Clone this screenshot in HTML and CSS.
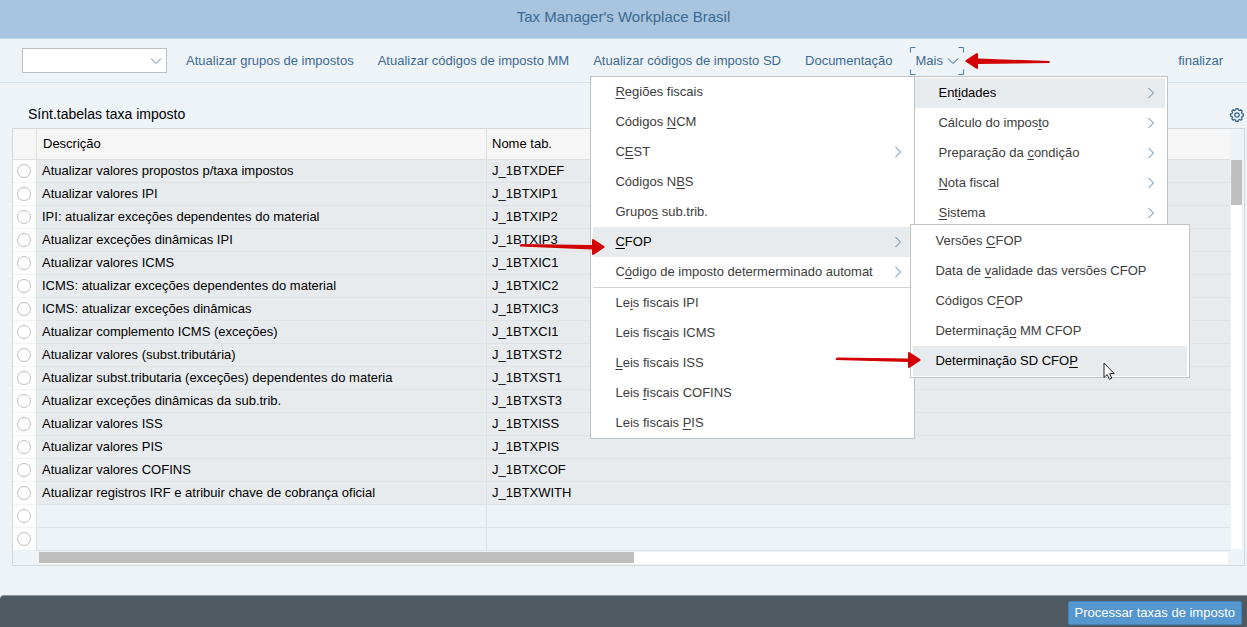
FILE: index.html
```html
<!DOCTYPE html>
<html lang="pt-BR">
<head>
<meta charset="utf-8">
<title>Tax Manager's Workplace Brasil</title>
<link rel="stylesheet" href="styles.css">
</head>
<body>
<header class="titlebar"><h1 class="titlebar-text">Tax Manager's Workplace Brasil</h1></header>

<nav class="toolbar">
  <div class="combo">
    <select class="combo-select" aria-label="Comando"><option></option></select>
    <svg class="combo-icon" width="12" height="8" viewBox="0 0 12 8"><path d="M1 1.5 6 6.500 11 1.500"/></svg>
  </div>
  <button class="tool">Atualizar grupos de impostos</button>
  <button class="tool">Atualizar códigos de imposto MM</button>
  <button class="tool">Atualizar códigos de imposto SD</button>
  <button class="tool">Documentação</button>
  <div class="more">
    <button class="tool more-button">Mais
      <svg width="12" height="8" viewBox="0 0 12 8"><path d="M1 1.500 6 6.500 11 1.500"/></svg>
    </button>
    <svg class="focus" viewBox="0 0 54 28"><path d="M.5 5.500V.5H5.500M48.500.5H53.500V5.500M53.500 22.500V27.500H48.500M5.500 27.500H.5V22.500"/></svg>

    <div class="menu menu-main">
      <button class="item active"><span>Ent<u>i</u>dades</span><svg class="chev" viewBox="0 0 8 12"><path d="M1.500 1 6.500 6 1.500 11"/></svg></button>
      <button class="item"><span>Cálculo do impos<u>t</u>o</span><svg class="chev" viewBox="0 0 8 12"><path d="M1.500 1 6.500 6 1.500 11"/></svg></button>
      <button class="item"><span>Preparação da <u>c</u>ondição</span><svg class="chev" viewBox="0 0 8 12"><path d="M1.500 1 6.500 6 1.500 11"/></svg></button>
      <button class="item"><span><u>N</u>ota fiscal</span><svg class="chev" viewBox="0 0 8 12"><path d="M1.500 1 6.500 6 1.500 11"/></svg></button>
      <button class="item"><span><u>S</u>istema</span><svg class="chev" viewBox="0 0 8 12"><path d="M1.500 1 6.500 6 1.500 11"/></svg></button>
    </div>

    <div class="menu menu-entities">
      <button class="item"><span><u>R</u>egiões fiscais</span></button>
      <button class="item"><span>Códigos <u>N</u>CM</span></button>
      <button class="item"><span>C<u>E</u>ST</span><svg class="chev" viewBox="0 0 8 12"><path d="M1.500 1 6.500 6 1.500 11"/></svg></button>
      <button class="item"><span>Códigos N<u>B</u>S</span></button>
      <button class="item"><span>Grupo<u>s</u> sub.trib.</span></button>
      <button class="item active"><span><u>C</u>FOP</span><svg class="chev" viewBox="0 0 8 12"><path d="M1.500 1 6.500 6 1.500 11"/></svg></button>
      <button class="item"><span>C<u>ó</u>digo de imposto determerminado automat</span><svg class="chev" viewBox="0 0 8 12"><path d="M1.500 1 6.500 6 1.500 11"/></svg></button>
      <hr class="divider">
      <button class="item"><span>Le<u>i</u>s fiscais IPI</span></button>
      <button class="item"><span>Leis fisc<u>a</u>is ICMS</span></button>
      <button class="item"><span><u>L</u>eis fiscais ISS</span></button>
      <button class="item"><span>Leis <u>f</u>iscais COFINS</span></button>
      <button class="item"><span>Leis fiscais <u>P</u>IS</span></button>
    </div>

    <div class="menu menu-cfop">
      <button class="item"><span>Versões <u>C</u>FOP</span></button>
      <button class="item"><span>Data de <u>v</u>alidade das versões CFOP</span></button>
      <button class="item"><span>Códigos C<u>F</u>OP</span></button>
      <button class="item"><span>Determinaçã<u>o</u> MM CFOP</span></button>
      <button class="item active"><span>Determinação SD CFO<u>P</u></span></button>
    </div>

    <svg class="arrow arrow-more" viewBox="0 0 86 18"><path d="M.5 9.500Q0 8.500 1 8L11 1.500Q13 .5 13 2V6.500L84 9Q86 10 84 11L13 12V16Q13 17.500 11 16.500Z"/></svg>
    <svg class="arrow arrow-entity" viewBox="0 0 86 18"><path d="M85.500 9.500Q86 8.500 85 8L75 1.500Q73 .5 73 2V7L2 6Q0 7 1 8.500L73 11.500V16Q73 17.500 75 16.500Z"/></svg>
    <svg class="arrow arrow-cfop" viewBox="0 0 86 18"><path d="M85.500 9.500Q86 8.500 85 8L75 1.500Q73 .5 73 2V7.500L2 6.500Q0 7.500 1 9L73 11V16Q73 17.500 75 16.500Z"/></svg>
    <svg class="pointer" viewBox="0 0 12 18"><path d="M1 1V15.500L4.200 12.500 6.400 17.200 8.800 16.200 6.700 11.600H11.200Z"/></svg>
  </div>
  <button class="tool tool-end">finalizar</button>
</nav>

<main class="content">
  <div class="panel-head">
    <h2 class="panel-title">Sínt.tabelas taxa imposto</h2>
    <button class="gear" aria-label="Configurações"><svg width="14" height="14" viewBox="0 0 14 14"><path d="M5.700 1.900 6 .600H8L8.300 1.900 9.700 2.500 10.800 1.800 12.200 3.200 11.500 4.300 12.100 5.700 13.400 6V8L12.100 8.300 11.500 9.700 12.200 10.800 10.800 12.200 9.700 11.500 8.300 12.100 8 13.400H6L5.700 12.100 4.300 11.500 3.200 12.200 1.800 10.800 2.500 9.700 1.900 8.300.600 8V6L1.900 5.700 2.500 4.300 1.800 3.200 3.200 1.800 4.300 2.500Z"/><circle cx="7" cy="7" r="2.200"/></svg></button>
  </div>
  <div class="grid">
    <table class="table">
      <colgroup><col class="col-pick"><col class="col-desc"><col></colgroup>
      <thead><tr><th></th><th>Descrição</th><th>Nome tab.</th></tr></thead>
      <tbody>
        <tr><td><input type="radio" name="row" aria-label="J_1BTXDEF"></td><td>Atualizar valores propostos p/taxa impostos</td><td>J_1BTXDEF</td></tr>
        <tr><td><input type="radio" name="row" aria-label="J_1BTXIP1"></td><td>Atualizar valores IPI</td><td>J_1BTXIP1</td></tr>
        <tr><td><input type="radio" name="row" aria-label="J_1BTXIP2"></td><td>IPI: atualizar exceções dependentes do material</td><td>J_1BTXIP2</td></tr>
        <tr><td><input type="radio" name="row" aria-label="J_1BTXIP3"></td><td>Atualizar exceções dinâmicas IPI</td><td>J_1BTXIP3</td></tr>
        <tr><td><input type="radio" name="row" aria-label="J_1BTXIC1"></td><td>Atualizar valores ICMS</td><td>J_1BTXIC1</td></tr>
        <tr><td><input type="radio" name="row" aria-label="J_1BTXIC2"></td><td>ICMS: atualizar exceções dependentes do material</td><td>J_1BTXIC2</td></tr>
        <tr><td><input type="radio" name="row" aria-label="J_1BTXIC3"></td><td>ICMS: atualizar exceções dinâmicas</td><td>J_1BTXIC3</td></tr>
        <tr><td><input type="radio" name="row" aria-label="J_1BTXCI1"></td><td>Atualizar complemento ICMS (exceções)</td><td>J_1BTXCI1</td></tr>
        <tr><td><input type="radio" name="row" aria-label="J_1BTXST2"></td><td>Atualizar valores (subst.tributária)</td><td>J_1BTXST2</td></tr>
        <tr><td><input type="radio" name="row" aria-label="J_1BTXST1"></td><td>Atualizar subst.tributaria (exceções) dependentes do materia</td><td>J_1BTXST1</td></tr>
        <tr><td><input type="radio" name="row" aria-label="J_1BTXST3"></td><td>Atualizar exceções dinâmicas da sub.trib.</td><td>J_1BTXST3</td></tr>
        <tr><td><input type="radio" name="row" aria-label="J_1BTXISS"></td><td>Atualizar valores ISS</td><td>J_1BTXISS</td></tr>
        <tr><td><input type="radio" name="row" aria-label="J_1BTXPIS"></td><td>Atualizar valores PIS</td><td>J_1BTXPIS</td></tr>
        <tr><td><input type="radio" name="row" aria-label="J_1BTXCOF"></td><td>Atualizar valores COFINS</td><td>J_1BTXCOF</td></tr>
        <tr><td><input type="radio" name="row" aria-label="J_1BTXWITH"></td><td>Atualizar registros IRF e atribuir chave de cobrança oficial</td><td>J_1BTXWITH</td></tr>
        <tr class="empty"><td><input type="radio" name="row" aria-label="Linha vazia 1"></td><td></td><td></td></tr>
        <tr class="empty"><td><input type="radio" name="row" aria-label="Linha vazia 2"></td><td></td><td></td></tr>
      </tbody>
    </table>
    <div class="vscroll"><div class="vthumb"></div></div>
    <div class="hscroll"><div class="hthumb"></div></div>
  </div>
</main>

<footer class="footer"><button class="primary">Processar taxas de imposto</button></footer>
</body>
</html>
```
FILE: styles.css
```css
* { box-sizing: border-box; }

body {
  margin: 0;
  min-height: 100vh;
  display: flex;
  flex-direction: column;
  background: #eef3f8;
  color: #000;
  font: 13px/16px "Liberation Sans", Arial, sans-serif;
}

button, select { font: inherit; color: inherit; }
button { border: 0; padding: 0; background: none; white-space: nowrap; }
svg { display: block; fill: none; stroke: #346187; }

.titlebar {
  height: 39px;
  padding-top: 8px;
  background: #a9c4de;
  border-bottom: 1px solid #bcd2e6;
  text-align: center;
}
.titlebar-text { margin: 0; color: #3c6a92; font-size: 15px; line-height: 18px; font-weight: normal; }

.toolbar {
  display: flex;
  align-items: center;
  height: 44px;
  padding: 0 24px 0 22px;
  gap: 24px;
  border-bottom: 1px solid #d2e1ee;
}
.tool { color: #3c6a92; }
.tool-end { margin-left: auto; }
.combo { position: relative; margin-right: -5px; }
.combo-select {
  display: block;
  width: 145px;
  height: 25px;
  appearance: none;
  background: #fff;
  border: 1px solid #bfbfbf;
  border-radius: 0;
}
.combo-icon { position: absolute; right: 5px; top: 9px; stroke: #5b86ab; pointer-events: none; }

.more { position: relative; margin-left: -6px; }
.more-button { display: flex; align-items: center; gap: 4px; height: 28px; padding: 0 5px; }
.focus { position: absolute; left: 0; top: 0; width: 54px; height: 28px; pointer-events: none; stroke: #4c80aa; }

/* Cascading menus, anchored to the "Mais" button */
.menu {
  position: absolute;
  display: flex;
  flex-direction: column;
  padding: 1px 0;
  background: #fff;
  border: 1px solid #bfc3c6;
  color: #3d3d3d;
}
.menu-main { left: 4px; top: 29px; width: 254px; height: 152px; padding-right: 2px; }
.menu-entities { left: -320px; top: 29px; width: 325px; padding: 0 0 0 2px; }
.menu-cfop { left: 0; top: 177px; width: 280px; padding: 1px 2px; }
.item {
  display: flex;
  align-items: center;
  justify-content: space-between;
  height: 30px;
  flex: none;
  padding: 0 12px 0 22px;
  text-align: left;
}
.menu-main .item { padding-left: 23px; padding-right: 10px; }
.item.active { background: #e8ebee; color: #000; }
.item u { text-decoration-skip-ink: none; text-underline-offset: 2px; }
.chev { width: 8px; height: 12px; stroke: #5480a5; }
.divider { width: 100%; margin: 0; border: 0; border-top: 1px solid #d0d3d5; }

/* Callout arrows and mouse pointer */
.arrow { position: absolute; width: 86px; height: 18px; fill: #d20000; stroke: none; pointer-events: none; }
.arrow-more { left: 55px; top: 5px; }
.arrow-entity { left: -391px; top: 191px; }
.arrow-cfop { left: -75px; top: 304px; }
.pointer { position: absolute; left: 193px; top: 315px; width: 12px; height: 18px; fill: #fff; stroke: #222; pointer-events: none; }

.content { flex: 1; padding: 20px 2px 20px 12px; }
.panel-head { display: flex; align-items: flex-start; justify-content: space-between; height: 25px; padding: 0 1px 0 16px; }
.panel-title { margin: 0; font-size: 14px; line-height: 22px; font-weight: normal; }
.gear { padding-top: 5px; }
.gear svg { stroke-width: 1.2; }

.grid {
  display: grid;
  grid-template-columns: 1fr 14px;
  border: 1px solid #d5d8da;
}
.table { width: 100%; table-layout: fixed; border-collapse: separate; border-spacing: 0; }
.col-pick { width: 24px; }
.col-desc { width: 450px; }
.table th, .table td {
  height: 23px;
  padding: 0 5px;
  background: #e8ebed;
  border-right: 1px solid #dee1e3;
  border-bottom: 1px solid #e0e3e4;
  text-align: left;
  font-weight: normal;
  white-space: nowrap;
}
.table th { height: 31px; padding: 0 6px; background: #f6f6f6; border-color: #dedede; }
.table td:first-child { padding: 0 0 0 4px; background: #fff; border-bottom-color: #f0f2f4; }
.table th:last-child, .table td:last-child { border-right: 0; }
.table th:last-child { padding: 0 5px; }
.table .empty td:not(:first-child) { background: #eef3f8; }
.table input {
  display: block;
  width: 14px;
  height: 14px;
  margin: 0;
  appearance: none;
  background: #fff;
  border: 1px solid #bdbdbd;
  border-radius: 50%;
}

.vscroll { width: 11px; margin: 31px 0 2px 1px; background: #fff; }
.vthumb { height: 45px; background: #bfbfbf; }
.hscroll { height: 12px; margin: 1px 2px 1px 26px; background: #fff; }
.hthumb { width: 50%; height: 11px; background: #bfbfbf; }

.footer {
  display: flex;
  align-items: flex-start;
  justify-content: flex-end;
  height: 32px;
  padding: 5px 5px 0 0;
  background: #4f5962;
  border-top: 1px solid #8d979f;
  border-radius: 4px 0 0 0;
}
.primary {
  height: 24px;
  padding: 0 6px;
  background: #5496cd;
  border: 1px solid #3f86c0;
  border-radius: 2px;
  color: #fff;
}
```
